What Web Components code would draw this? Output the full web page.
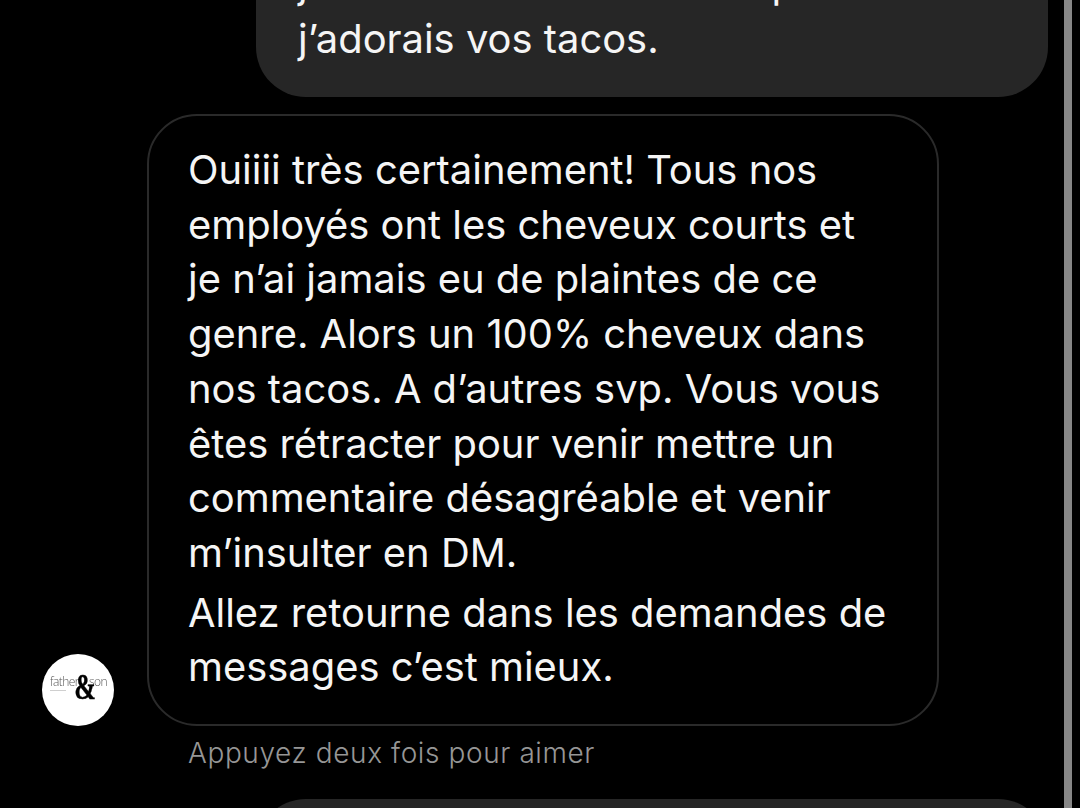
<!DOCTYPE html>
<html lang="fr">
<head>
<meta charset="utf-8">
<title>Messages</title>
<style>
  html, body { margin: 0; height: 100%; background: #000; overflow: hidden; }
</style>
</head>
<body>
<chat-thread>
  <chat-bubble kind="sent" style="--clip:-60px">j’ <span style="display:inline-block;width:431px"></span> p<br>j’adorais vos tacos.</chat-bubble>
  <chat-row>
    <shop-avatar slot="avatar"></shop-avatar>
    <chat-bubble kind="received">
      <p>Ouiiii très certainement! Tous nos<br>employés ont les cheveux courts et<br>je n’ai jamais eu de plaintes de ce<br>genre. Alors un 100% cheveux dans<br>nos tacos. A d’autres svp. Vous vous<br>êtes rétracter pour venir mettre un<br>commentaire désagréable et venir<br>m’insulter en DM.</p>
      <p>Allez retourne dans les demandes de<br>messages c’est mieux.</p>
    </chat-bubble>
  </chat-row>
  <like-hint>Appuyez deux fois pour aimer</like-hint>
  <chat-bubble kind="sent" style="--clip:30px"></chat-bubble>
</chat-thread>

<script>
class ChatThread extends HTMLElement {
  constructor() {
    super();
    this.attachShadow({ mode: 'open' });
    this.shadowRoot.innerHTML = `
      <style>
        :host {
          display: flex;
          flex-direction: column;
          position: relative;
          width: 1080px;
          height: 808px;
          overflow: hidden;
          background: #000;
          font-family: Inter, "Liberation Sans", sans-serif;
          color: #f5f5f5;
        }
        .bar {
          position: absolute;
          left: 1064px;
          top: 0;
          width: 8px;
          height: 808px;
          background: #878787;
        }
      </style>
      <slot></slot>
      <div class="bar"></div>
    `;
  }
}

class ChatBubble extends HTMLElement {
  constructor() {
    super();
    this.attachShadow({ mode: 'open' });
    this.shadowRoot.innerHTML = `
      <style>
        :host {
          display: block;
          box-sizing: border-box;
          width: 792px;
          font-size: 39.9px;
          line-height: 54.7px;
          border-radius: 50px;
        }
        :host([kind="sent"]) {
          flex: none;
          margin: var(--clip, 13px) 0 0 256px;
          padding: 17px 42px 30px;
          background: #262626;
          height: 157px;
        }
        :host([kind="received"]) {
          padding: 27px 39px 29px;
          border: 2px solid #2a2a2a;
        }
        ::slotted(p) { margin: 0; }
        ::slotted(p:last-child) { margin-top: 5px; }
      </style>
      <slot></slot>
    `;
  }
}

class ChatRow extends HTMLElement {
  constructor() {
    super();
    this.attachShadow({ mode: 'open' });
    this.shadowRoot.innerHTML = `
      <style>
        :host {
          display: flex;
          flex: none;
          align-items: flex-end;
          gap: 33px;
          margin: 17px 0 0 42px;
        }
      </style>
      <slot name="avatar"></slot>
      <slot></slot>
    `;
  }
}

class ShopAvatar extends HTMLElement {
  constructor() {
    super();
    this.attachShadow({ mode: 'open' });
    this.shadowRoot.innerHTML = `
      <style>
        :host {
          display: block;
          position: relative;
          flex: none;
          width: 72px;
          height: 72px;
          border-radius: 50%;
          background: #fff;
          overflow: hidden;
        }
        span { position: absolute; white-space: nowrap; line-height: 1; }
        .father, .son {
          font-family: "Open Sans", sans-serif;
          font-weight: 300;
          font-size: 12px;
          letter-spacing: -.6px;
          color: #555;
          top: 22px;
          transform: translateZ(0);
        }
        .father { left: 8px; }
        .son { left: 47px; }
        .tag {
          left: 8px;
          top: 36px;
          width: 16px;
          height: 1px;
          background: #cfcfcf;
        }
        .amp {
          font-family: "Liberation Serif", serif;
          font-weight: bold;
          font-size: 36px;
          color: #000;
          -webkit-text-stroke: .4px #000;
          left: 28px;
          top: 15px;
          transform: scaleX(.72);
        }
      </style>
      <span class="father">father</span>
      <span class="son">son</span>
      <span class="tag"></span>
      <span class="amp">&amp;</span>
    `;
  }
}

class LikeHint extends HTMLElement {
  constructor() {
    super();
    this.attachShadow({ mode: 'open' });
    this.shadowRoot.innerHTML = `
      <style>
        :host {
          display: block;
          flex: none;
          margin: 11px 0 0 188px;
          font-size: 28px;
          font-weight: 300;
          letter-spacing: .6px;
          line-height: 32px;
          color: #969696;
        }
      </style>
      <slot></slot>
    `;
  }
}

customElements.define('chat-thread', ChatThread);
customElements.define('chat-bubble', ChatBubble);
customElements.define('chat-row', ChatRow);
customElements.define('shop-avatar', ShopAvatar);
customElements.define('like-hint', LikeHint);
</script>
</body>
</html>
